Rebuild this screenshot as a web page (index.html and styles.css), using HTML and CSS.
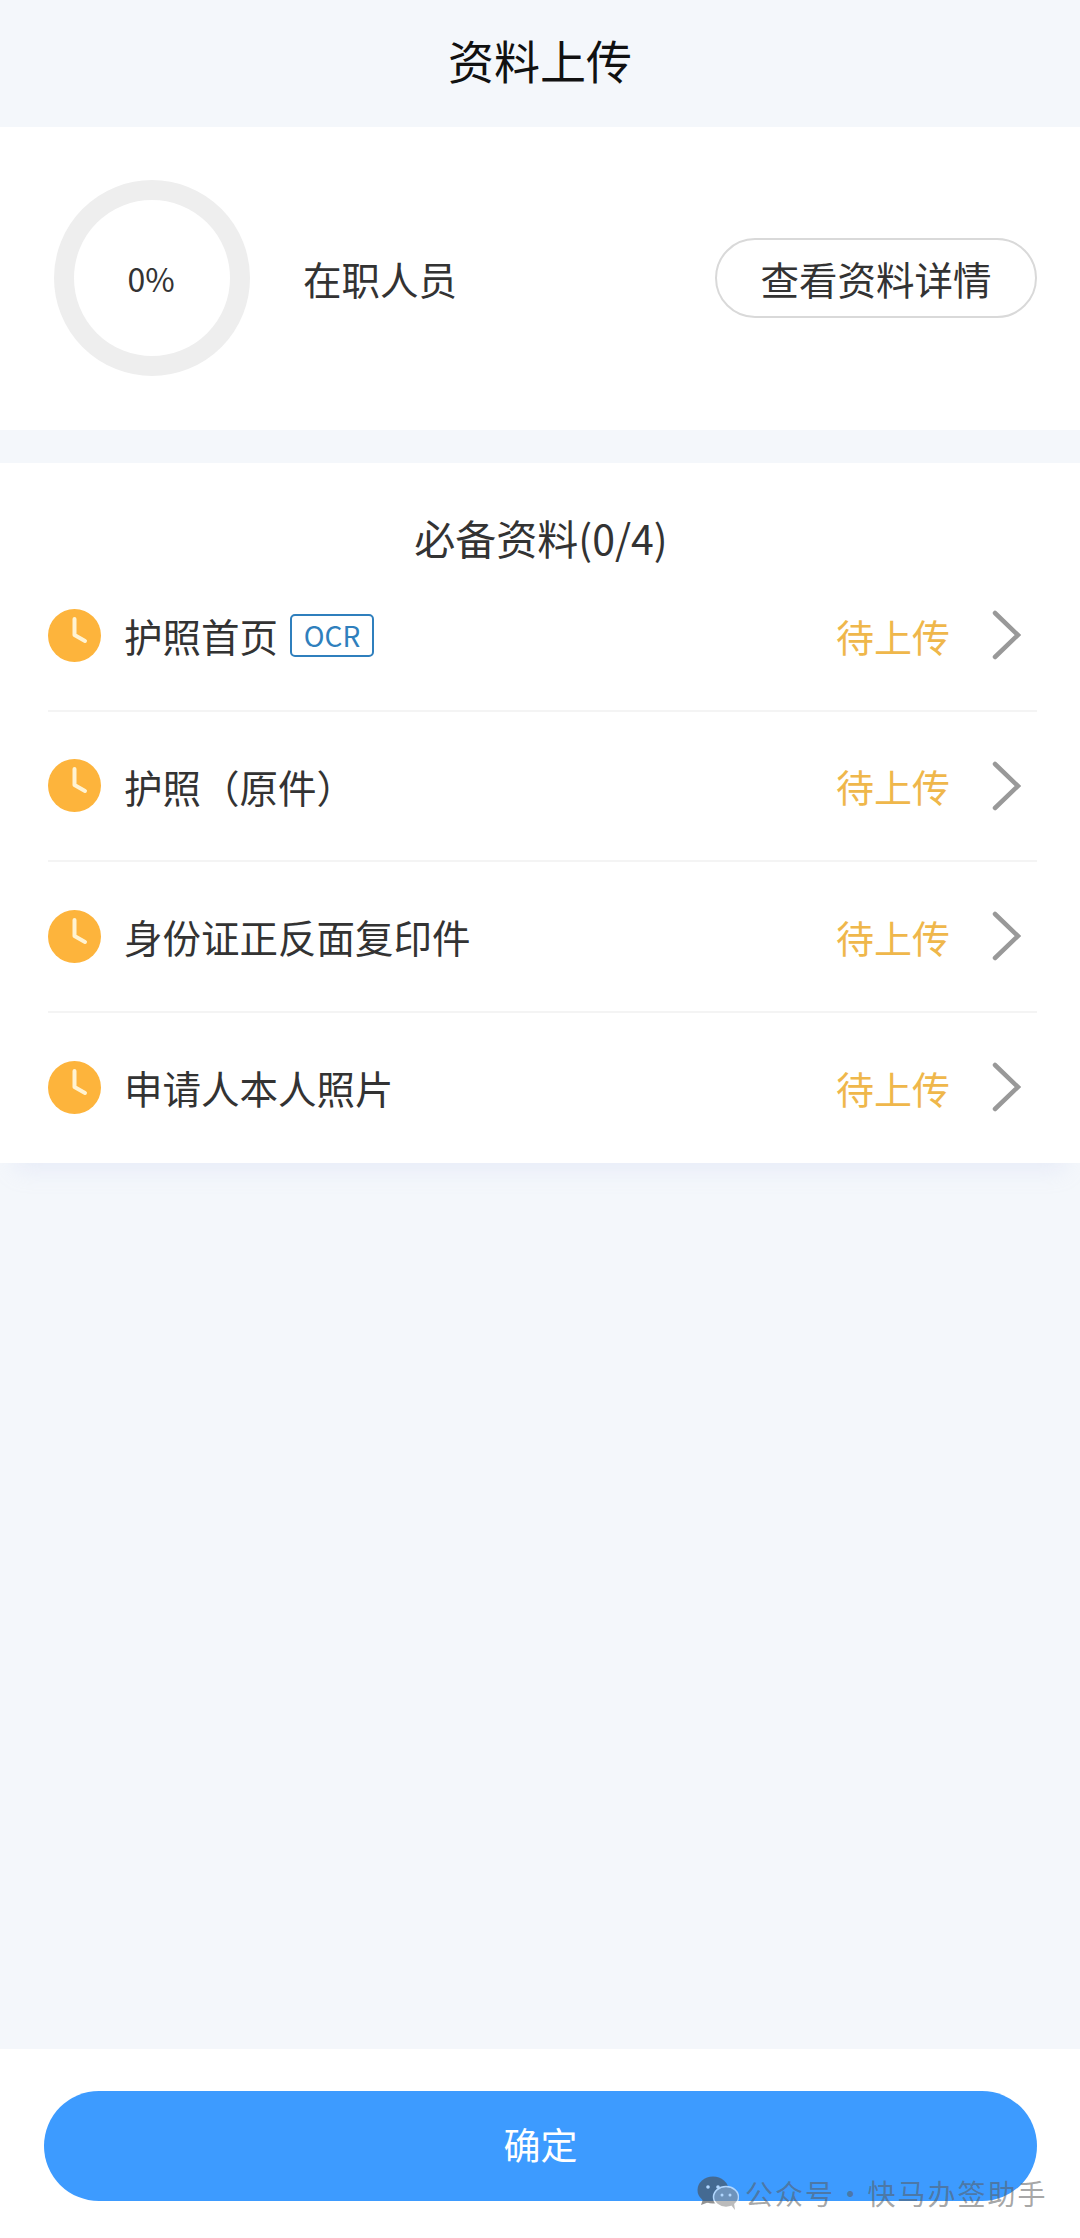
FILE: index.html
```html
<!DOCTYPE html>
<html lang="zh-CN">
<head>
    <meta charset="UTF-8">
    <meta name="viewport" content="width=device-width, initial-scale=1.0">
    <title>资料上传</title>
    <link rel="stylesheet" href="styles.css">
</head>
<body>
    <header class="page-title">资料上传</header>

    <section class="summary">
        <div class="ring">0%</div>
        <div class="summary-name">在职人员</div>
        <div class="detail-btn">查看资料详情</div>
    </section>

    <section class="docs">
        <div class="docs-title">必备资料(0/4)</div>
        <div class="doc-row">
            <svg class="clock" viewBox="0 0 53 53"><circle cx="26.5" cy="26.5" r="26.5" fill="#fdb43c"/><path d="M26.5 10v16l10.500 6" fill="none" stroke="#fff3d2" stroke-width="4" stroke-linecap="round" stroke-linejoin="round"/></svg>
            <span class="doc-name">护照首页</span>
            <span class="ocr">OCR</span>
            <span class="doc-status">待上传</span>
            <svg class="chevron" viewBox="0 0 29 50"><path d="M3 3l23 22L3 47" fill="none" stroke="#999" stroke-width="4.500" stroke-linecap="round" stroke-linejoin="miter"/></svg>
        </div>
        <div class="doc-row">
            <svg class="clock" viewBox="0 0 53 53"><circle cx="26.5" cy="26.5" r="26.5" fill="#fdb43c"/><path d="M26.5 10v16l10.500 6" fill="none" stroke="#fff3d2" stroke-width="4" stroke-linecap="round" stroke-linejoin="round"/></svg>
            <span class="doc-name">护照（原件）</span>
            <span class="doc-status">待上传</span>
            <svg class="chevron" viewBox="0 0 29 50"><path d="M3 3l23 22L3 47" fill="none" stroke="#999" stroke-width="4.500" stroke-linecap="round" stroke-linejoin="miter"/></svg>
        </div>
        <div class="doc-row">
            <svg class="clock" viewBox="0 0 53 53"><circle cx="26.5" cy="26.5" r="26.5" fill="#fdb43c"/><path d="M26.5 10v16l10.500 6" fill="none" stroke="#fff3d2" stroke-width="4" stroke-linecap="round" stroke-linejoin="round"/></svg>
            <span class="doc-name">身份证正反面复印件</span>
            <span class="doc-status">待上传</span>
            <svg class="chevron" viewBox="0 0 29 50"><path d="M3 3l23 22L3 47" fill="none" stroke="#999" stroke-width="4.500" stroke-linecap="round" stroke-linejoin="miter"/></svg>
        </div>
        <div class="doc-row">
            <svg class="clock" viewBox="0 0 53 53"><circle cx="26.5" cy="26.5" r="26.5" fill="#fdb43c"/><path d="M26.5 10v16l10.500 6" fill="none" stroke="#fff3d2" stroke-width="4" stroke-linecap="round" stroke-linejoin="round"/></svg>
            <span class="doc-name">申请人本人照片</span>
            <span class="doc-status">待上传</span>
            <svg class="chevron" viewBox="0 0 29 50"><path d="M3 3l23 22L3 47" fill="none" stroke="#999" stroke-width="4.500" stroke-linecap="round" stroke-linejoin="miter"/></svg>
        </div>
    </section>

    <div class="spacer"></div>

    <footer class="bottom-bar">
        <div class="confirm-btn">确定</div>
    </footer>

    <div class="watermark">
        <svg class="wechat" viewBox="0 0 42 34">
            <ellipse cx="16" cy="14" rx="15.500" ry="13.500" fill="#4a4a4a"/>
            <path d="M6 23l-2 6 8-3z" fill="#4a4a4a"/>
            <ellipse cx="29" cy="21" rx="12.500" ry="10.500" fill="#8f8f8f" stroke="#fff" stroke-width="1.500"/>
            <path d="M34 29l4 5-1-7z" fill="#8f8f8f"/>
            <circle cx="11" cy="11" r="1.800" fill="#fff"/>
            <circle cx="21" cy="11" r="1.800" fill="#fff"/>
            <circle cx="25" cy="19" r="1.500" fill="#fff"/>
            <circle cx="33" cy="19" r="1.500" fill="#fff"/>
        </svg>
        <span>公众号 · 快马办签助手</span>
    </div>
</body>
</html>
```

FILE: styles.css
```css
* {
    box-sizing: border-box;
}
body {
    position: relative;
    margin: 0;
    height: 2238px;
    display: flex;
    flex-direction: column;
    background-color: #f4f7fb;
    color: #333;
    font-family: "Noto Sans CJK SC", "Noto Sans", sans-serif;
}
.page-title {
    height: 127px;
    padding-bottom: 9px;
    display: flex;
    align-items: center;
    justify-content: center;
    font-size: 46px;
    color: #111;
}
.summary {
    height: 303px;
    padding: 0 43px 2px 54px;
    display: flex;
    align-items: center;
    background-color: #fff;
}
.ring {
    width: 196px;
    height: 196px;
    border: 20px solid #eee;
    border-radius: 50%;
    padding-right: 2px;
    display: flex;
    align-items: center;
    justify-content: center;
    font-size: 32px;
}
.summary-name {
    margin-left: 53px;
    font-size: 38.5px;
}
.detail-btn {
    margin-left: auto;
    width: 322px;
    height: 80px;
    border: 2px solid #d9d9d9;
    border-radius: 40px;
    display: flex;
    align-items: center;
    justify-content: center;
    font-size: 38.5px;
}
.docs {
    margin-top: 33px;
    padding: 0 43px 0 48px;
    background-color: #fff;
    box-shadow: 0 22px 22px -16px rgba(190, 200, 240, 0.25);
}
.docs-title {
    height: 98px;
    padding: 56px 3px 0 0;
    line-height: 36px;
    text-align: center;
    font-size: 41px;
}
.doc-row {
    height: 150.6px;
    display: flex;
    align-items: center;
    border-bottom: 2px solid #f4f4f4;
}
.doc-row:last-child {
    border-bottom-color: transparent;
}
.clock {
    width: 53px;
    height: 53px;
    flex-shrink: 0;
}
.doc-name {
    margin-left: 23px;
    font-size: 38.5px;
}
.ocr {
    margin-left: 12px;
    width: 84px;
    height: 43px;
    border: 2px solid #2f7fbd;
    border-radius: 5px;
    display: flex;
    align-items: center;
    justify-content: center;
    color: #2f7fbd;
    font-size: 28px;
}
.doc-status {
    margin-left: auto;
    color: #efb74b;
    font-size: 38px;
}
.chevron {
    margin: 0 16px 0 42px;
    width: 29px;
    height: 50px;
    flex-shrink: 0;
}
.spacer {
    flex-grow: 1;
}
.bottom-bar {
    height: 189px;
    padding: 42px 43px 0 44px;
    background-color: #fff;
}
.confirm-btn {
    height: 110px;
    padding-bottom: 4px;
    border-radius: 55px;
    display: flex;
    align-items: center;
    justify-content: center;
    background-color: #3d9bff;
    color: #fff;
    font-size: 37px;
}
/* sits over the button corner, like the image stamp it copies */
.watermark {
    position: absolute;
    left: 697px;
    top: 2173px;
    display: flex;
    align-items: center;
    gap: 6px;
    color: rgba(90, 90, 90, 0.55);
    font-size: 28px;
    letter-spacing: 2px;
    word-spacing: -7px;
    white-space: nowrap;
}
.wechat {
    width: 42px;
    height: 34px;
    opacity: 0.6;
}
```
